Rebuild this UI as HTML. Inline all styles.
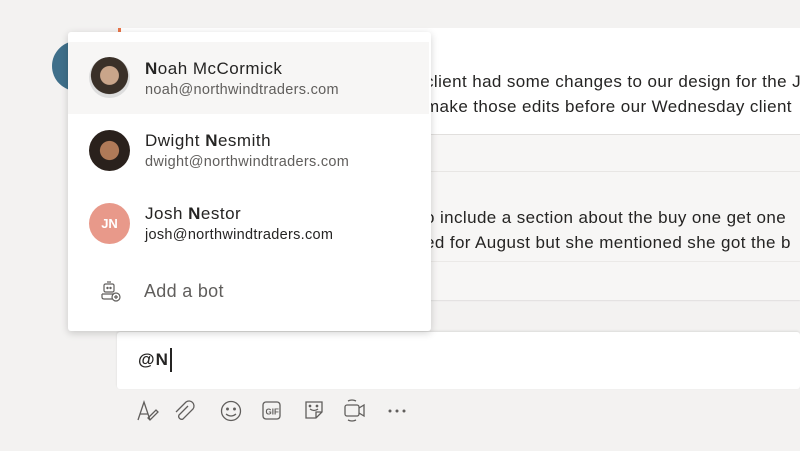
<!DOCTYPE html>
<html><head><style>
*{margin:0;padding:0;box-sizing:border-box}
body{width:800px;height:451px;background:#f3f2f1;font-family:"Segoe UI","Liberation Sans",sans-serif;color:#252423;position:relative;overflow:hidden}
.abs{position:absolute}
.msg{font-size:17px;white-space:nowrap;color:#252423;letter-spacing:.4px}
.pop{left:68px;top:32px;width:363px;height:299px;background:#fff;border-radius:3px;box-shadow:0 2px 8px rgba(0,0,0,.18)}
.row{position:absolute;left:0;width:363px;height:72px}
.av{position:absolute;left:21px;width:41px;height:41px;border-radius:50%}
.nm{position:absolute;left:77px;font-size:17px;white-space:nowrap;letter-spacing:.5px}
.em{position:absolute;left:77px;font-size:14.5px;color:#605e5c;white-space:nowrap;letter-spacing:.3px}
</style></head><body>
<div class="abs" style="left:52px;top:41px;width:50px;height:50px;border-radius:50%;background:#3f6f8a"></div>
<div class="abs" style="left:118px;top:28px;width:682px;height:107px;background:#fff;border-bottom:1px solid #e1dfdd"></div>
<div class="abs" style="left:118px;top:28px;width:3px;height:4px;background:#e97548"></div>
<div class="abs" style="left:118px;top:135px;width:682px;height:37px;background:#f7f6f5;border-bottom:1px solid #e8e6e4"></div>
<div class="abs" style="left:118px;top:172px;width:682px;height:90px;background:#f7f6f5;border-bottom:1px solid #ebe9e7"></div>
<div class="abs" style="left:118px;top:262px;width:682px;height:38px;background:#f7f6f5;box-shadow:0 1px 1px rgba(0,0,0,.08)"></div>
<div class="abs msg" style="left:425px;top:72px">client had some changes to our design for the J</div>
<div class="abs msg" style="left:425px;top:97px">make those edits before our Wednesday client</div>
<div class="abs msg" style="left:425px;top:208px">o include a section about the buy one get one</div>
<div class="abs msg" style="left:425px;top:233px">ed for August but she mentioned she got the b</div>
<div class="abs" style="left:117px;top:332px;width:683px;height:57px;background:#fff;border-radius:3px;box-shadow:0 -1px 2px rgba(0,0,0,.1)"></div>
<div class="abs" style="left:138px;top:350px;font-size:17px;font-weight:bold;color:#252423;letter-spacing:1px">@N</div>
<div class="abs" style="left:170px;top:348px;width:1.5px;height:24px;background:#252423"></div>
<svg class="abs" style="left:130px;top:396px" width="290" height="30" fill="none" stroke="#605e5c" stroke-width="1.3">
<path d="M8 24 L14 6 L20 24 M10 18 H18"/><path d="M18 22 l8-8 2 2-8 8z"/>
<path d="M58 10 l-9 9 a3 3 0 0 0 4 4 l10-10 a5 5 0 0 0-7-7 l-10 10"/>
<circle cx="101" cy="15" r="9.5"/><circle cx="97.5" cy="13" r=".8" fill="#605e5c"/><circle cx="104.5" cy="13" r=".8" fill="#605e5c"/><path d="M96 18 q5 4 10 0"/>
<rect x="133" y="6" width="17" height="17" rx="3"/><text x="135.5" y="18.5" font-size="8" font-family="Liberation Sans" fill="#605e5c" stroke="none" font-weight="bold">GIF</text>
<path d="M176 6 h16 v10 l-6 6 h-10z M186 22 v-6 h6"/><path d="M180 13 q4 3 8 0"/><circle cx="180" cy="10" r=".7" fill="#605e5c"/><circle cx="187" cy="10" r=".7" fill="#605e5c"/>
<rect x="215" y="9" width="14" height="11" rx="2"/><path d="M229 12 l5-3 v11 l-5-3"/><path d="M218 5 q4-2 8 0 M218 24 q4 2 8 0"/>
<circle cx="260" cy="15" r="1.5" fill="#605e5c" stroke="none"/><circle cx="267" cy="15" r="1.5" fill="#605e5c" stroke="none"/><circle cx="274" cy="15" r="1.5" fill="#605e5c" stroke="none"/>
</svg>
<div class="abs pop">
<div class="row" style="top:10px;background:#f7f6f5;height:72px;width:361px">
<div class="av" style="top:15px;background:radial-gradient(circle at 50% 45%,#c9a58a 0 30%,#3a3028 32% 60%,#ddd 62%)"></div>
<div class="nm" style="top:17px"><b>N</b>oah McCormick</div>
<div class="em" style="top:40px">noah@northwindtraders.com</div>
</div>
<div class="row" style="top:82px">
<div class="av" style="top:16px;background:radial-gradient(circle at 50% 50%,#b07a58 0 32%,#2a211c 34% 70%,#5a4a3e 72%)"></div>
<div class="nm" style="top:17px">Dwight <b>N</b>esmith</div>
<div class="em" style="top:40px">dwight@northwindtraders.com</div>
</div>
<div class="row" style="top:154px">
<div class="av" style="top:17px;background:#e8998a;color:#fff;font-size:13px;font-weight:bold;text-align:center;line-height:41px">JN</div>
<div class="nm" style="top:18px">Josh <b>N</b>estor</div>
<div class="em" style="top:41px;color:#252423">josh@northwindtraders.com</div>
</div>
<svg class="abs" style="left:32px;top:248px" width="24" height="24" fill="none" stroke="#605e5c" stroke-width="1.2">
<rect x="4" y="4" width="10" height="8" rx="1.5"/><path d="M7 2 h4"/><circle cx="7.5" cy="8" r=".6" fill="#605e5c"/><circle cx="10.5" cy="8" r=".6" fill="#605e5c"/>
<path d="M2 14 h12 M2 14 v3 q0 2 2 2 h8"/><circle cx="16" cy="17" r="4"/><path d="M16 15 v4 M14 17 h4"/>
</svg>
<div class="abs" style="left:76px;top:249px;font-size:18px;color:#605e5c;letter-spacing:.3px">Add a bot</div>
</div>
</body></html>
